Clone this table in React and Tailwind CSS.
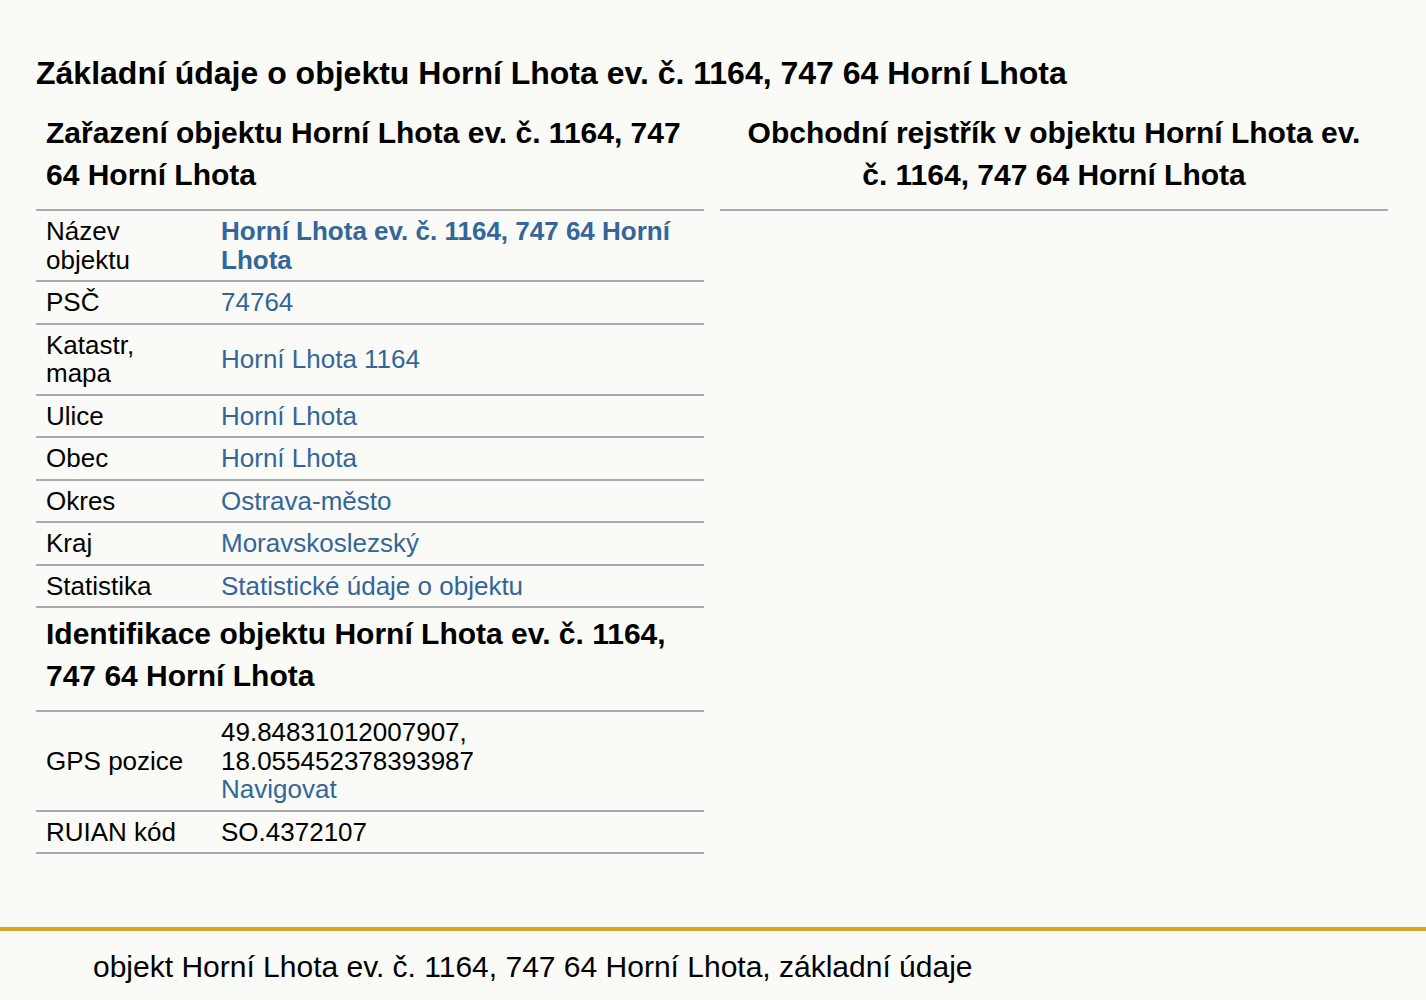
import React from "react";

const font = { fontFamily: '"Liberation Sans", Arial, sans-serif' };

function Row({ label, children }) {
  return (
    <div className="grid grid-cols-[175px_1fr] items-center border-b-2 border-[#aaaaaa] text-[26px] leading-[28.5px]">
      <div className="px-[10px] py-[6px] text-black">{label}</div>
      <div className="px-[10px] py-[6px] text-black">{children}</div>
    </div>
  );
}

function L({ children, bold }) {
  return (
    <a href="#" className={"text-[#336699] no-underline" + (bold ? " font-bold" : "")}>
      {children}
    </a>
  );
}

export default function App() {
  return (
    <div className="min-h-[1000px] bg-[#fafaf6] text-black" style={font}>
      <div className="ml-[36px] w-[1352px] pt-[51px]">
        <h1 className="text-[32px] font-bold leading-[45px] whitespace-nowrap">
          Základní údaje o objektu Horní Lhota ev. č. 1164, 747 64 Horní Lhota
        </h1>
        <div className="mt-[16px] grid grid-cols-[668px_668px] gap-x-[16px] items-start">
          <div>
            <h2 className="px-[10px] pb-[13px] text-[30px] font-bold leading-[42px]">
              Zařazení objektu Horní Lhota ev. č. 1164, 747
              <br />
              64 Horní Lhota
            </h2>
            <div className="border-t-2 border-[#aaaaaa]">
              <Row label="Název objektu">
                <L bold>
                  Horní Lhota ev. č. 1164, 747 64 Horní
                  <br />
                  Lhota
                </L>
              </Row>
              <Row label="PSČ">
                <L>74764</L>
              </Row>
              <Row label={<>Katastr,<br />mapa</>}>
                <L>Horní Lhota 1164</L>
              </Row>
              <Row label="Ulice">
                <L>Horní Lhota</L>
              </Row>
              <Row label="Obec">
                <L>Horní Lhota</L>
              </Row>
              <Row label="Okres">
                <L>Ostrava-město</L>
              </Row>
              <Row label="Kraj">
                <L>Moravskoslezský</L>
              </Row>
              <Row label="Statistika">
                <L>Statistické údaje o objektu</L>
              </Row>
            </div>
            <h2 className="px-[10px] pt-[5px] pb-[13px] text-[30px] font-bold leading-[42px]">
              Identifikace objektu Horní Lhota ev. č. 1164,
              <br />
              747 64 Horní Lhota
            </h2>
            <div className="border-t-2 border-[#aaaaaa]">
              <Row label="GPS pozice">
                <div>49.84831012007907,</div>
                <div>18.055452378393987</div>
                <div>
                  <L>Navigovat</L>
                </div>
              </Row>
              <Row label="RUIAN kód">SO.4372107</Row>
            </div>
          </div>
          <div>
            <h2 className="px-[10px] pb-[13px] text-center text-[30px] font-bold leading-[42px]">
              Obchodní rejstřík v objektu Horní Lhota ev.
              <br />
              č. 1164, 747 64 Horní Lhota
            </h2>
            <div className="border-t-2 border-[#aaaaaa]"></div>
          </div>
        </div>
      </div>
      <div className="mt-[73px] border-t-4 border-[#daa520] pl-[93px] pt-[20px] pb-[20px]">
        <div className="text-[30px] leading-[32px] whitespace-nowrap">
          objekt Horní Lhota ev. č. 1164, 747 64 Horní Lhota, základní údaje
        </div>
      </div>
    </div>
  );
}
